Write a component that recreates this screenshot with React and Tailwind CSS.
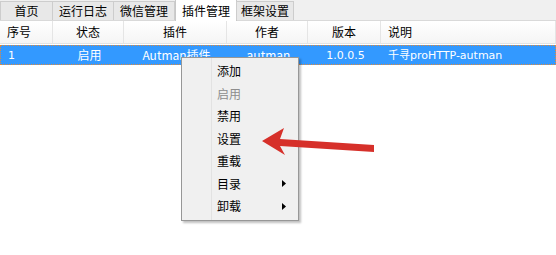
import React from 'react';

const tabs = ['首页', '运行日志', '微信管理', '插件管理', '框架设置'];
const tabWidths = ['w-[53px]', 'w-[62px]', 'w-[62px]', 'w-[62px]', 'w-[58px]'];

const cols = [
  { label: '序号', w: 'w-[53px]', align: 'justify-start pl-[7px]' },
  { label: '状态', w: 'w-[71px]', align: 'justify-center' },
  { label: '插件', w: 'w-[103px]', align: 'justify-center' },
  { label: '作者', w: 'w-[81px]', align: 'justify-center' },
  { label: '版本', w: 'w-[73px]', align: 'justify-center' },
  { label: '说明', w: 'flex-1', align: 'justify-start pl-[7px]' },
];

const row = ['1', '启用', 'Autman插件', 'autman', '1.0.0.5', '千寻proHTTP-autman'];

const menu = [
  { label: '添加' },
  { label: '启用', disabled: true },
  { label: '禁用' },
  { label: '设置' },
  { label: '重载' },
  { label: '目录', sub: true },
  { label: '卸载', sub: true },
];

export default function App() {
  return (
    <div className="relative w-[556px] h-[255px] bg-white overflow-hidden text-[12px] text-black font-['Noto_Sans_CJK_SC','DejaVu_Sans',sans-serif]">
      {/* Tabs */}
      <div className="flex items-end h-[21px] bg-[#f0f0f0] border-b border-[#d9d9d9]">
        {tabs.map((t, i) =>
          i === 3 ? (
            <div
              key={t}
              className={`${tabWidths[i]} h-[22px] -mb-px bg-white border border-b-0 border-[#c8c8c8] flex items-center justify-center leading-none`}
            >
              {t}
            </div>
          ) : (
            <div
              key={t}
              className={`${tabWidths[i]} h-[19px] bg-[#e8e8e8] border border-b-0 border-[#cdcdcd] -ml-px first:ml-0 flex items-center justify-center leading-none`}
            >
              {t}
            </div>
          )
        )}
      </div>

      {/* Header */}
      <div className="flex h-[23px] bg-gradient-to-b from-white to-[#f5f5f5] border-b border-[#e3e3e3]">
        {cols.map((c) => (
          <div key={c.label} className={`${c.w} ${c.align} flex items-center border-r border-[#e5e5e5] leading-none`}>
            {c.label}
          </div>
        ))}
      </div>

      {/* Selected row */}
      <div className="flex h-[20px] mt-px bg-[#3399ff] text-white border border-dotted border-[#e08a3c] leading-none">
        {cols.map((c, i) => (
          <div
            key={c.label}
            className={`${c.w} flex items-center ${i === 0 ? 'pl-[7px]' : i === 5 ? 'pl-[6px]' : 'justify-center'} ${i === 4 || i === 0 || i === 5 ? "font-['DejaVu_Sans','Noto_Sans_CJK_SC',sans-serif] text-[11px]" : ''}`}
          >
            {row[i]}
          </div>
        ))}
      </div>

      {/* Context menu */}
      <div className="absolute left-[181px] top-[57px] w-[118px] h-[164px] bg-[#f0f0f0] border border-[#979797] shadow-[2px_2px_2px_rgba(0,0,0,0.25)] flex flex-col py-[2px]">
        <div className="absolute left-[29px] top-0 bottom-0 border-l border-[#e2e2e2]" />
        {menu.map((m) => (
          <div key={m.label} className="relative flex items-center h-[22.5px] pl-[35px] pr-[12px]">
            <span className={m.disabled ? 'text-[#8d8d8d]' : 'text-black'}>{m.label}</span>
            {m.sub && (
              <svg className="ml-auto" width="4" height="7" viewBox="0 0 4 7">
                <polygon points="0,0 4,3.5 0,7" fill="#000" />
              </svg>
            )}
          </div>
        ))}
      </div>

      {/* Red arrow annotation */}
      <svg className="absolute left-0 top-0 pointer-events-none" width="556" height="255">
        <polygon
          points="262,141 284,128 280,139 374,145 374,152 280,146 285,155"
          fill="#d6302a"
        />
      </svg>
    </div>
  );
}
